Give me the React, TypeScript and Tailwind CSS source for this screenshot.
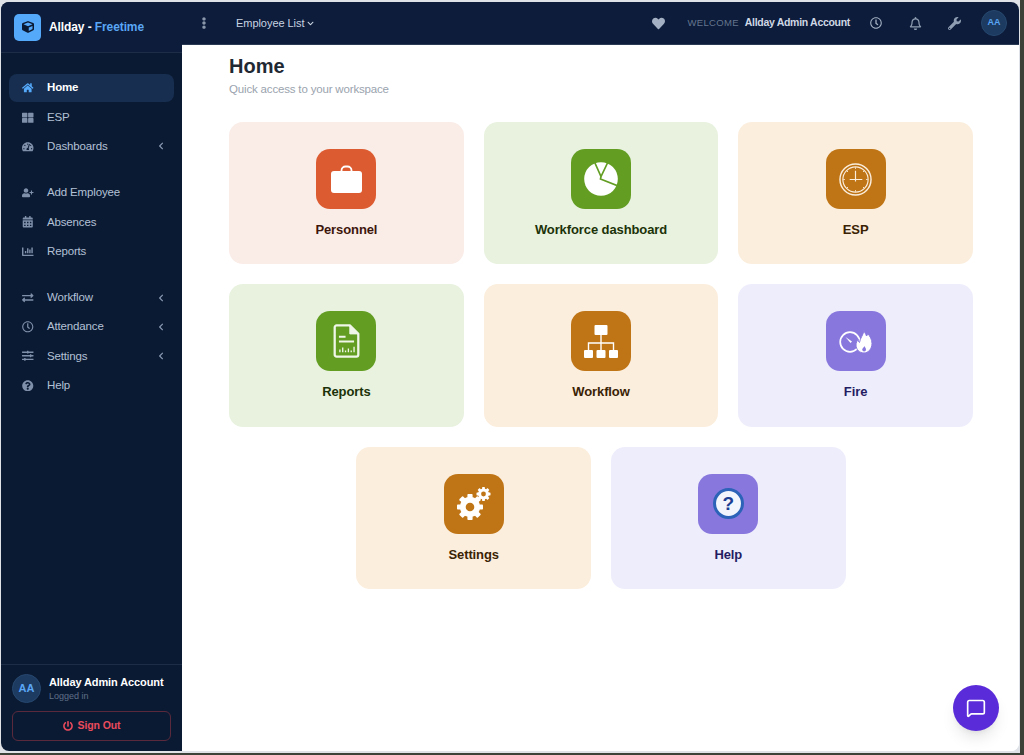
import type { ReactNode } from "react";
import {
  FaCalendarAlt,
  FaChartBar,
  FaChevronDown,
  FaChevronLeft,
  FaCube,
  FaEllipsisV,
  FaExchangeAlt,
  FaHeart,
  FaHome,
  FaPowerOff,
  FaQuestionCircle,
  FaRegBell,
  FaRegClock,
  FaSlidersH,
  FaTachometerAlt,
  FaThLarge,
  FaUserPlus,
  FaWrench,
} from "react-icons/fa";
import { MessageSquare } from "lucide-react";

const BagIcon = () => (
  <svg viewBox="0 0 31 28" className="w-[31px] h-[28px]" fill="none">
    <path d="M10.500 7V5.500a4 4 0 0 1 4-4h2a4 4 0 0 1 4 4V7" stroke="#fff" strokeWidth="1.800" />
    <rect x="0" y="6" width="31" height="22" rx="3" fill="#fff" />
  </svg>
);

const PieIcon = () => (
  <svg viewBox="0 0 34 34" className="w-[34px] h-[34px]">
    <circle cx="17" cy="17" r="16.800" fill="#fff" />
    <path d="M10.500 0L17 14.500L24 0M17 14.500L16.500 17L34 24" fill="none" stroke="#639e23" strokeWidth="1.700" />
  </svg>
);

const ClockIcon = () => (
  <svg viewBox="0 0 34 34" className="w-[33px] h-[33px]" fill="none" stroke="#fbeedd">
    <circle cx="17" cy="17" r="16" strokeWidth="1.500" />
    <circle cx="17" cy="17" r="13" strokeWidth="1.200" />
    <path d="M17 8v11M11 17h13" strokeWidth="1.200" />
    <path d="M17 4.500v1.500M17 28v1.500M4.500 17H6M28 17h1.500M8.200 8.200l1 1M24.800 24.800l1 1M25.800 8.200l-1 1M9.200 24.800l-1 1" strokeWidth="1" />
  </svg>
);

const ReportIcon = () => (
  <svg viewBox="0 0 28 36" className="w-[27px] h-[34px]" fill="none" stroke="#f0f6e8">
    <path d="M3.500 1.500h14l9 9v22a2 2 0 0 1-2 2h-21a2 2 0 0 1-2-2v-29a2 2 0 0 1 2-2z" strokeWidth="2.400" strokeLinejoin="round" />
    <path d="M17.500 1.500v9h9z" fill="#f0f6e8" strokeWidth="1" strokeLinejoin="round" />
    <path d="M6 13.500h7M6 18.500h16" strokeWidth="2" />
    <path d="M7 30v-3M10 30v-5M13 30v-2M16 30v-4M19 30v-2M22 30v-6" strokeWidth="1.400" />
  </svg>
);

const SitemapIcon = () => (
  <svg viewBox="0 0 34 33" className="w-[34px] h-[33px]">
    <path d="M17 9v9M4.500 27v-9h25v9M17 18v9" fill="none" stroke="#fff" strokeWidth="1.400" />
    <rect x="10.500" y="0" width="13" height="10" rx="1" fill="#fff" />
    <rect x="0" y="25" width="9" height="8" rx="1" fill="#fff" />
    <rect x="12.500" y="25" width="9" height="8" rx="1" fill="#fff" />
    <rect x="25" y="25" width="9" height="8" rx="1" fill="#fff" />
  </svg>
);

const FireIcon = () => (
  <svg viewBox="0 0 34 23" className="w-[34px] h-[23px]">
    <circle cx="11" cy="12" r="9.800" fill="none" stroke="#fff" strokeWidth="1.700" />
    <path d="M6.500 7l6.500 4.500-1.500 1.500z" fill="#fff" />
    <path
      d="M25 0c.5 3 2 4 2.500 6 .8-.5 1-1.500 1-2.500 2.500 2.500 4.500 6 4.500 10 0 5-3.500 9.500-8 9.500s-8-3.500-8-8c0-2.500 1-4 2-5.500.2 1.500.6 2.300 1.500 3 .5-4.500 4-7.500 4.500-12.500z"
      fill="#fff"
      stroke="#8878de"
      strokeWidth="1"
    />
    <path d="M25.500 16c.4 1.300 1.500 2 1.500 3.500 0 1.200-.8 2-1.900 2s-1.900-.8-1.900-1.900c0-1.500 1.800-2 2.300-3.600z" fill="#8878de" />
  </svg>
);

const Gear = ({ cx, cy, r, hole, teeth }: { cx: number; cy: number; r: number; hole: number; teeth: number }) => (
  <g>
    {Array.from({ length: teeth }, (_, i) => (
      <rect
        key={i}
        x={cx - r * 0.2}
        y={cy - r}
        width={r * 0.4}
        height={r * 0.4}
        rx={r * 0.06}
        fill="#fff"
        transform={`rotate(${(360 / teeth) * i} ${cx} ${cy})`}
      />
    ))}
    <circle cx={cx} cy={cy} r={r * 0.78} fill="#fff" />
    <circle cx={cx} cy={cy} r={hole} fill="#bf7415" />
  </g>
);

const GearsIcon = () => (
  <svg viewBox="0 0 36 36" className="w-[36px] h-[36px]">
    <Gear cx={14} cy={21} r={13} hole={4.300} teeth={8} />
    <Gear cx={27.500} cy={8} r={7} hole={2.400} teeth={8} />
  </svg>
);

const HelpIcon = () => (
  <div className="w-[31px] h-[31px] rounded-full bg-[#f2f6fc] border-[3px] border-[#2c63b8] flex items-center justify-center text-[19px] leading-none font-bold text-[#1c3f94]">
    ?
  </div>
);

type Tile = { label: string; icon: ReactNode; card: string; tile: string; text: string };

const tiles: Tile[] = [
  { label: "Personnel", icon: <BagIcon />, card: "bg-[#faece7]", tile: "bg-[#dd5b30]", text: "text-[#3d160b]" },
  { label: "Workforce dashboard", icon: <PieIcon />, card: "bg-[#e8f2df]", tile: "bg-[#639e23]", text: "text-[#1c3208]" },
  { label: "ESP", icon: <ClockIcon />, card: "bg-[#fbeedd]", tile: "bg-[#bf7415]", text: "text-[#3a2204]" },
  { label: "Reports", icon: <ReportIcon />, card: "bg-[#e8f2df]", tile: "bg-[#639e23]", text: "text-[#1c3208]" },
  { label: "Workflow", icon: <SitemapIcon />, card: "bg-[#fbeedd]", tile: "bg-[#bf7415]", text: "text-[#3a2204]" },
  { label: "Fire", icon: <FireIcon />, card: "bg-[#eeedfc]", tile: "bg-[#8878de]", text: "text-[#241c62]" },
  { label: "Settings", icon: <GearsIcon />, card: "bg-[#fbeedd]", tile: "bg-[#bf7415]", text: "text-[#3a2204]" },
  { label: "Help", icon: <HelpIcon />, card: "bg-[#eeedfc]", tile: "bg-[#8878de]", text: "text-[#241c62]" },
];

type NavItem = { label: string; icon: ReactNode; active?: boolean; caret?: boolean };

const navGroups: NavItem[][] = [
  [
    { label: "Home", icon: <FaHome />, active: true },
    { label: "ESP", icon: <FaThLarge /> },
    { label: "Dashboards", icon: <FaTachometerAlt />, caret: true },
  ],
  [
    { label: "Add Employee", icon: <FaUserPlus /> },
    { label: "Absences", icon: <FaCalendarAlt /> },
    { label: "Reports", icon: <FaChartBar /> },
  ],
  [
    { label: "Workflow", icon: <FaExchangeAlt />, caret: true },
    { label: "Attendance", icon: <FaRegClock />, caret: true },
    { label: "Settings", icon: <FaSlidersH />, caret: true },
    { label: "Help", icon: <FaQuestionCircle /> },
  ],
];

const Sidebar = () => (
  <aside className="w-[181px] shrink-0 flex flex-col bg-[#0b1a33] rounded-tl-[8px] rounded-bl-[8px]">
    <div className="h-[51px] shrink-0 flex items-center gap-[8px] pl-[13px] border-b border-[#1d2c47] bg-[#0c1c3a] rounded-tl-[8px]">
      <div className="w-[27px] h-[27px] rounded-[5px] bg-[#55a9fb] flex items-center justify-center text-[#0b1a33] text-[12px]">
        <FaCube />
      </div>
      <div className="text-[12px] tracking-[-0.1px] font-bold text-white">
        Allday - <span className="text-[#5aa6f5]">Freetime</span>
      </div>
    </div>
    <nav className="flex-1 flex flex-col gap-[18.300px] pt-[21px] px-[8px]">
      {navGroups.map((group, i) => (
        <div key={i} className="flex flex-col gap-[1px]">
          {group.map((item) => (
            <div
              key={item.label}
              className={`h-[28.200px] flex items-center rounded-[8px] pl-[13px] pr-[9px] text-[11.500px] tracking-[-0.15px] ${
                item.active ? "bg-[#172e50] text-white font-bold" : "text-[#b3c1d6]"
              }`}
            >
              <span className={`w-[12px] flex justify-center text-[11.500px] ${item.active ? "text-[#55a9fb]" : "text-[#7f90ab]"}`}>
                {item.icon}
              </span>
              <span className="ml-[13px] flex-1">{item.label}</span>
              {item.caret && <FaChevronLeft className="text-[8px] text-[#8a9ab3]" />}
            </div>
          ))}
        </div>
      ))}
    </nav>
    <div className="shrink-0 border-t border-[#1d2c47] px-[11px] pt-[9px] pb-[10px]">
      <div className="flex items-center gap-[8px]">
        <div className="w-[29px] h-[29px] rounded-full bg-[#1d3a60] border border-[#27486f] flex items-center justify-center text-[11px] font-bold text-[#5aa6f5]">
          AA
        </div>
        <div>
          <div className="text-[11px] tracking-[-0.1px] font-bold text-white leading-[15px]">Allday Admin Account</div>
          <div className="text-[9px] text-[#5f7088] leading-[13px]">Logged in</div>
        </div>
      </div>
      <div className="mt-[8px] h-[30px] flex items-center justify-center gap-[5px] rounded-[6px] border border-[#5a2a3c] text-[10.500px] tracking-[-0.1px] font-bold text-[#e94b5c]">
        <FaPowerOff className="text-[10px]" />
        Sign Out
      </div>
    </div>
  </aside>
);

const Topbar = () => (
  <header className="h-[43px] shrink-0 flex items-center bg-[#0c1c3a] border-b border-[#2a3a55] rounded-tr-[8px] pr-[12px] pl-[16px] text-[#c9d3e2]">
    <FaEllipsisV className="text-[12px] text-[#8a97ab]" />
    <div className="ml-[26px] flex items-center gap-[3px] text-[11px] tracking-[-0.05px] text-[#c9d3e2]">
      Employee List
      <FaChevronDown className="text-[7px]" />
    </div>
    <div className="ml-auto flex items-center">
      <FaHeart className="text-[13px] text-[#a3afc2]" />
      <span className="ml-[23px] text-[9.500px] tracking-[0.300px] text-[#65758f]">WELCOME</span>
      <span className="ml-[6px] text-[10.500px] tracking-[-0.3px] font-bold text-[#d0d8e5]">Allday Admin Account</span>
      <FaRegClock className="ml-[20px] text-[12px] text-[#a3afc2]" />
      <FaRegBell className="ml-[27px] text-[13px] text-[#8f9db2]" />
      <FaWrench className="ml-[26px] text-[13px] text-[#8f9db2]" />
      <div className="ml-[20px] w-[26px] h-[26px] rounded-full bg-[#1d3a60] border border-[#27486f] flex items-center justify-center text-[9px] font-bold text-[#5aa6f5]">
        AA
      </div>
    </div>
  </header>
);

export default function App() {
  return (
    <div className="relative h-[755px] w-[1024px] overflow-hidden bg-[#dfe3e8] border-r-[4px] border-b-[2px] border-[#3d4238] pt-[2px] pl-[1px] pr-[1px] pb-[2px] font-['Liberation_Sans',Arial,sans-serif]">
      <div className="h-full flex rounded-[8px] bg-white">
        <Sidebar />
        <div className="flex-1 flex flex-col min-w-0">
          <Topbar />
          <main className="flex-1 bg-white rounded-br-[8px] pl-[47px] pr-[46px] pt-[9px]">
            <h1 className="text-[20px] leading-[24px] font-bold text-[#1f2933]">Home</h1>
            <p className="mt-[3px] text-[11.500px] tracking-[-0.17px] leading-[16px] text-[#9aa3ae]">Quick access to your workspace</p>
            <div className="mt-[25px] flex flex-wrap justify-center gap-[20px]">
              {tiles.map((t) => (
                <div key={t.label} className={`w-[234.600px] h-[142.300px] rounded-[14px] pt-[27px] flex flex-col items-center ${t.card}`}>
                  <div className={`w-[60px] h-[60px] rounded-[14px] flex items-center justify-center ${t.tile}`}>{t.icon}</div>
                  <div className={`mt-[13px] text-[13px] tracking-[-0.1px] leading-[16px] font-bold ${t.text}`}>{t.label}</div>
                </div>
              ))}
            </div>
          </main>
        </div>
      </div>
      <button className="absolute left-[953px] top-[685px] w-[46px] h-[46px] rounded-full bg-[#5a2bd8] flex items-center justify-center text-white shadow-lg">
        <MessageSquare className="w-[20px] h-[20px]" />
      </button>
    </div>
  );
}
